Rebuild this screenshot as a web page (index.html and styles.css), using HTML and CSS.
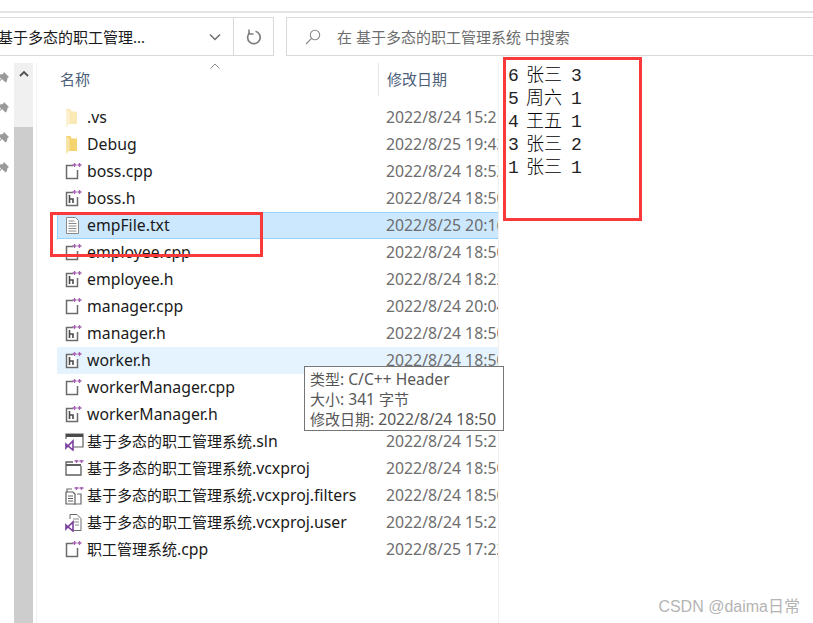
FILE: index.html
```html
<!DOCTYPE html>
<html lang="zh-CN">
  <head>
    <meta charset="UTF-8" />
    <title>基于多态的职工管理系统</title>
    <link rel="stylesheet" href="styles.css">
  </head>
  <body>
    <svg class="defs" width="0" height="0">
      <defs>
        <g id="plus">
          <path d="M9.500 0v4M7.500 2h4M14.500 0v4M12.500 2h4" fill="none" stroke="#a45fb0" stroke-width="1.300" />
        </g>
        <g id="i-cpp">
          <path d="M8 2.500H1.500v13h11V7" fill="#fff" stroke="#6b6b6b" stroke-width="1.500" />
          <use href="#plus" />
        </g>
        <g id="i-h">
          <path d="M8 2.500H1.500v13h11V7" fill="#fff" stroke="#6b6b6b" stroke-width="1.500" />
          <path d="M4.500 5v8M4.500 9h3.500v4" fill="none" stroke="#4a4a4a" stroke-width="1.600" />
          <use href="#plus" />
        </g>
        <g id="i-txt">
          <path d="M1.500 .5h9l3 3v13h-12z" fill="#fff" stroke="#8a8a8a" />
          <path d="M3.500 4h6M3.500 6.500h8M3.500 9h8M3.500 11.500h8M3.500 14h8" stroke="#8a8a8a" />
        </g>
        <g id="i-sln">
          <path d="M1 6V1h17v13H9" fill="#fff" stroke="#5f5f5f" stroke-width="1.200" />
          <path d="M1 2.500h17" stroke="#4a4a4a" stroke-width="3" />
          <path d="M1 11l2 1.800L8 8v9l-5-4.200L1 15z" fill="none" stroke="#7a3f9d" stroke-width="1.600" />
        </g>
        <g id="i-proj">
          <path d="M8 2H1v13h15V6" fill="#fff" stroke="#5f5f5f" stroke-width="1.300" />
          <path d="M1 5h15" stroke="#5f5f5f" stroke-width="2" />
          <g transform="translate(2 -1)"><use href="#plus" /></g>
        </g>
        <g id="i-filters">
          <path d="M7 2H2v3M12 7h4v10H9" fill="none" stroke="#6b6b6b" stroke-width="1.200" />
          <path d="M1 5h7l2 2v10H1z" fill="#fff" stroke="#5f5f5f" stroke-width="1.200" />
          <path d="M3 9h5M3 11.500h5M3 14h5" stroke="#5f5f5f" />
          <g transform="translate(2 -1)"><use href="#plus" /></g>
        </g>
        <g id="i-user">
          <path d="M5 5V.5h7l4 4v12H9" fill="#fff" stroke="#6b6b6b" />
          <path d="M8 5h6M9 8h5M10 11h4" stroke="#8a8a8a" />
          <path d="M1 11l2 1.800L8 8v9l-5-4.200L1 15z" fill="none" stroke="#7a3f9d" stroke-width="1.600" />
        </g>
        <g id="i-folder">
          <path d="M1 0h4.500l1 2.500H12V15H4L1 18z" fill="currentColor" />
          <path d="M1 0v18l3.500-3V2.500z" fill="#fff" opacity=".4" />
        </g>
        <path id="i-pin" d="M6 0l5 5-1.500 1-.5 3-1.500 1.500L4 7 1 10.500 0 10l3-3.500L.5 4 2 2.500l3-.5z" fill="#9a9a9a" />
      </defs>
    </svg>

    <div class="topline"></div>

    <div class="toolbar">
      <div class="address">
        <span class="address-text">基于多态的职工管理...</span>
        <svg class="chevron" width="12" height="8" viewBox="0 0 12 8">
          <path d="M1 1.500l5 5 5-5" fill="none" stroke="#6d6d6d" stroke-width="1.500" />
        </svg>
        <div class="refresh">
          <svg width="16" height="16" viewBox="0 0 16 16">
            <path d="M9.500 2.300A6.300 6.300 0 1 1 3.800 3.600" fill="none" stroke="#7d7d7d" stroke-width="1.700" />
            <path d="M3 .5v4.500h4.500" fill="none" stroke="#7d7d7d" stroke-width="1.500" />
          </svg>
        </div>
      </div>
      <div class="search">
        <svg width="16" height="16" viewBox="0 0 16 16">
          <circle cx="10" cy="6" r="4.700" fill="none" stroke="#8a8a8a" stroke-width="1.100" />
          <path d="M6.500 9.500L1 15" stroke="#8a8a8a" stroke-width="1.100" />
        </svg>
        <span>在 基于多态的职工管理系统 中搜索</span>
      </div>
    </div>

    <div class="main">
      <div class="pins">
        <svg width="11" height="12"><use href="#i-pin" /></svg>
        <svg width="11" height="12"><use href="#i-pin" /></svg>
        <svg width="11" height="12"><use href="#i-pin" /></svg>
        <svg width="11" height="12"><use href="#i-pin" /></svg>
      </div>

      <div class="scrollbar">
        <div class="scroll-up">
          <svg width="10" height="7" viewBox="0 0 10 7">
            <path d="M1 6l4-4 4 4" fill="none" stroke="#505050" stroke-width="1.800" />
          </svg>
        </div>
      </div>

      <div class="gutter"></div>

      <div class="files">
        <div class="header">
          <div class="col-name">名称
            <svg class="sort" width="10" height="6" viewBox="0 0 10 6">
              <path d="M.5 5.500l4.500-4.500 4.500 4.500" fill="none" stroke="#8a8a8a" />
            </svg>
          </div>
          <div class="col-date">修改日期</div>
        </div>

        <div class="row">
          <svg class="icon" width="20" height="18"><use href="#i-folder" class="pale" /></svg>
          <span class="name">.vs</span><span class="date">2022/8/24 15:21</span>
        </div>
        <div class="row">
          <svg class="icon" width="20" height="18"><use href="#i-folder" class="yellow" /></svg>
          <span class="name">Debug</span><span class="date">2022/8/25 19:43</span>
        </div>
        <div class="row">
          <svg class="icon" width="20" height="18"><use href="#i-cpp" /></svg>
          <span class="name">boss.cpp</span><span class="date">2022/8/24 18:52</span>
        </div>
        <div class="row">
          <svg class="icon" width="20" height="18"><use href="#i-h" /></svg>
          <span class="name">boss.h</span><span class="date">2022/8/24 18:50</span>
        </div>
        <div class="row selected">
          <svg class="icon" width="20" height="18"><use href="#i-txt" /></svg>
          <span class="name">empFile.txt</span><span class="date">2022/8/25 20:16</span>
        </div>
        <div class="row">
          <svg class="icon" width="20" height="18"><use href="#i-cpp" /></svg>
          <span class="name">employee.cpp</span><span class="date">2022/8/24 18:50</span>
        </div>
        <div class="row">
          <svg class="icon" width="20" height="18"><use href="#i-h" /></svg>
          <span class="name">employee.h</span><span class="date">2022/8/24 18:22</span>
        </div>
        <div class="row">
          <svg class="icon" width="20" height="18"><use href="#i-cpp" /></svg>
          <span class="name">manager.cpp</span><span class="date">2022/8/24 20:04</span>
        </div>
        <div class="row">
          <svg class="icon" width="20" height="18"><use href="#i-h" /></svg>
          <span class="name">manager.h</span><span class="date">2022/8/24 18:50</span>
        </div>
        <div class="row hover">
          <svg class="icon" width="20" height="18"><use href="#i-h" /></svg>
          <span class="name">worker.h</span><span class="date">2022/8/24 18:50</span>
        </div>
        <div class="row">
          <svg class="icon" width="20" height="18"><use href="#i-cpp" /></svg>
          <span class="name">workerManager.cpp</span><span class="date">2022/8/24 18:50</span>
        </div>
        <div class="row">
          <svg class="icon" width="20" height="18"><use href="#i-h" /></svg>
          <span class="name">workerManager.h</span><span class="date">2022/8/24 18:50</span>
        </div>
        <div class="row">
          <svg class="icon" width="20" height="18"><use href="#i-sln" /></svg>
          <span class="name"><span class="zh">基于多态的职工管理系统</span>.sln</span><span class="date">2022/8/24 15:21</span>
        </div>
        <div class="row">
          <svg class="icon" width="20" height="18"><use href="#i-proj" /></svg>
          <span class="name"><span class="zh">基于多态的职工管理系统</span>.vcxproj</span><span class="date">2022/8/24 18:50</span>
        </div>
        <div class="row">
          <svg class="icon" width="20" height="18"><use href="#i-filters" /></svg>
          <span class="name"><span class="zh">基于多态的职工管理系统</span>.vcxproj.filters</span><span class="date">2022/8/24 18:50</span>
        </div>
        <div class="row">
          <svg class="icon" width="20" height="18"><use href="#i-user" /></svg>
          <span class="name"><span class="zh">基于多态的职工管理系统</span>.vcxproj.user</span><span class="date">2022/8/24 15:21</span>
        </div>
        <div class="row">
          <svg class="icon" width="20" height="18"><use href="#i-cpp" /></svg>
          <span class="name"><span class="zh">职工管理系统</span>.cpp</span><span class="date">2022/8/25 17:22</span>
        </div>
      </div>
    </div>

    <div class="note">
      <div class="note-line">6 <b>张三</b> 3</div>
      <div class="note-line">5 <b>周六</b> 1</div>
      <div class="note-line">4 <b>王五</b> 1</div>
      <div class="note-line">3 <b>张三</b> 2</div>
      <div class="note-line">1 <b>张三</b> 1</div>
    </div>

    <div class="mark"></div>

    <div class="tooltip">
      <div class="tip-line"><span class="zh">类型</span>: C/C++ Header</div>
      <div class="tip-line"><span class="zh">大小</span>: 341 <span class="zh">字节</span></div>
      <div class="tip-line"><span class="zh">修改日期</span>: 2022/8/24 18:50</div>
    </div>

    <div class="watermark">CSDN @daima日常</div>
  </body>
</html>
```

FILE: styles.css
```css
html,
body {
  margin: 0;
  height: 623px;
  overflow: hidden;
  background: #fff;
}
body {
  position: relative;
  font-family: "Noto Sans", "Noto Sans CJK SC", sans-serif;
  font-size: 15px;
  color: #1a1a1a;
}
.defs {
  position: absolute;
}
.topline {
  margin-top: 11px;
  height: 2px;
  background: #e3e3e3;
}

/* address + search */
.toolbar {
  display: flex;
  margin-top: 4px;
  height: 39px;
}
.address {
  display: flex;
  align-items: center;
  box-sizing: border-box;
  width: 274px;
  border: 1px solid #d9d9d9;
  border-left: none;
  overflow: hidden;
}
.address-text {
  margin-left: -2px;
  width: 211px;
  white-space: nowrap;
}
.chevron {
  flex: none;
  margin-left: 5px;
}
.refresh {
  display: flex;
  align-items: center;
  justify-content: center;
  flex: none;
  margin-left: 12px;
  width: 39px;
  height: 100%;
  border-left: 1px solid #d9d9d9;
}
.search {
  display: flex;
  align-items: center;
  flex: 1;
  margin-left: 12px;
  padding-left: 18px;
  border: 1px solid #d9d9d9;
  border-right: none;
  color: #6d6d6d;
  font-size: 15px;
}
.search span {
  margin-left: 16px;
}

/* left side + list */
.main {
  display: flex;
  margin-top: 7px;
}
.pins {
  display: flex;
  flex-direction: column;
  flex: none;
  gap: 18px;
  width: 14px;
  margin-left: -2px;
  padding-top: 9px;
}
.scrollbar {
  flex: none;
  width: 19px;
  height: 560px;
  margin-left: 2px;
  background: #cdcdcd;
}
.scroll-up {
  display: flex;
  justify-content: center;
  box-sizing: border-box;
  height: 64px;
  padding-top: 7px;
  background: #f0f0f0;
}
.gutter {
  flex: none;
  width: 1px;
  height: 560px;
  margin-left: 3px;
  background: #f2f2f2;
}
.files {
  box-sizing: border-box;
  width: 442px;
  height: 560px;
  margin-left: 20px;
  border-right: 1px solid #f0f0f0;
  overflow: hidden;
}
.header {
  display: flex;
  height: 33px;
  margin-bottom: 8px;
  color: #4c607a;
  font-size: 15px;
}
.col-name {
  position: relative;
  box-sizing: border-box;
  flex: none;
  width: 322px;
  padding: 5px 0 0 3px;
  border-right: 1px solid #e5e5e5;
}
.sort {
  position: absolute;
  left: 153px;
  top: 0;
}
.col-date {
  padding: 5px 0 0 8px;
}
.row {
  display: flex;
  align-items: center;
  box-sizing: border-box;
  height: 27px;
  white-space: nowrap;
  font-size: 15.8px;
}
.row.selected {
  background: #cce8ff;
  border: 1px solid #99d1ff;
  border-right: none;
}
.row.selected .icon {
  margin-left: 7px;
}
.row.hover {
  background: #e5f3ff;
}
.icon {
  flex: none;
  margin-left: 8px;
}
.pale {
  color: #fbe9b5;
}
.yellow {
  color: #f5d36e;
}
.name {
  flex: none;
  width: 299px;
  margin: 0 0 2px 2px;
}
.date {
  flex: none;
  margin-bottom: 2px;
  color: #6d6d6d;
}
.zh {
  font-size: 15px;
}

/* notepad window, sits over the list */
.note {
  position: absolute;
  left: 503px;
  top: 57px;
  box-sizing: border-box;
  width: 139px;
  height: 164px;
  padding: 4px 0 0 2px;
  border: 3px solid #fa3a3a;
  background: #fff;
  color: #222;
  font-family: "Liberation Mono", monospace;
  font-size: 18px;
  letter-spacing: -1.8px;
  white-space: nowrap;
}
.note-line {
  height: 23px;
  line-height: 23px;
}
.note b {
  font-family: "Noto Sans CJK SC", sans-serif;
  font-size: 18px;
  font-weight: 300;
  letter-spacing: 0;
  line-height: 1;
  color: #000;
}

/* red marker round empFile.txt */
.mark {
  position: absolute;
  left: 50px;
  top: 212px;
  box-sizing: border-box;
  width: 213px;
  height: 45px;
  border: 3px solid #fa3a3a;
}
.tooltip {
  position: absolute;
  left: 304px;
  top: 366px;
  box-sizing: border-box;
  width: 200px;
  height: 65px;
  padding: 2px 0 0 5px;
  border: 1px solid #767676;
  background: #fff;
  color: #575757;
  font-size: 15.6px;
  white-space: nowrap;
}
.tip-line {
  height: 20px;
  line-height: 20px;
}
.tooltip .zh {
  font-size: 15px;
  line-height: 1;
}
.watermark {
  position: absolute;
  right: 13px;
  top: 593px;
  color: #b4b4b4;
  font-family: "Liberation Sans", "Noto Sans CJK SC", sans-serif;
  font-size: 16px;
}
```
